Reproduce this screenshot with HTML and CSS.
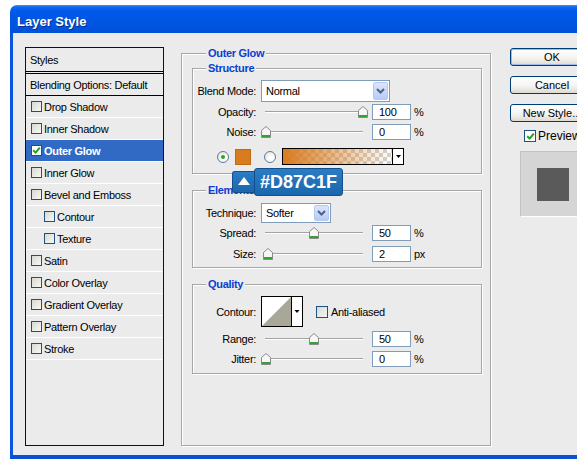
FILE: index.html
```html
<!DOCTYPE html>
<html>
<head>
<meta charset="utf-8">
<title>Layer Style</title>
<link rel="stylesheet" href="styles.css">
</head>
<body>
<div class="window">
  <div class="titlebar">Layer Style</div>
  <div class="body">
    <ul class="styles">
      <li class="hdr">Styles</li>
      <li class="blend">Blending Options: Default</li>
      <li><span class="cb"></span>Drop Shadow</li>
      <li><span class="cb"></span>Inner Shadow</li>
      <li class="sel"><span class="cb on"><svg width="9" height="9" viewBox="0 0 9 9"><path d="M1.2 4.2 L3.6 6.6 L7.8 1.6" fill="none" stroke="#21a121" stroke-width="2"/></svg></span>Outer Glow</li>
      <li><span class="cb"></span>Inner Glow</li>
      <li><span class="cb"></span>Bevel and Emboss</li>
      <li class="sub"><span class="cb"></span>Contour</li>
      <li class="sub"><span class="cb"></span>Texture</li>
      <li><span class="cb"></span>Satin</li>
      <li><span class="cb"></span>Color Overlay</li>
      <li><span class="cb"></span>Gradient Overlay</li>
      <li><span class="cb"></span>Pattern Overlay</li>
      <li><span class="cb"></span>Stroke</li>
    </ul>

    <fieldset class="group outer">
      <legend>Outer Glow</legend>

      <fieldset class="group inner structure">
        <legend>Structure</legend>
        <div class="row r-blend">
          <span class="lbl">Blend Mode:</span>
          <div class="select sel-blend"><span class="val">Normal</span><span class="drop"><svg width="9" height="6" viewBox="0 0 9 6"><path d="M1 1 L4.5 4.5 L8 1" fill="none" stroke="#4d6185" stroke-width="2"/></svg></span></div>
        </div>
        <div class="row r16 mb4">
          <span class="lbl">Opacity:</span>
          <div class="slider"><div class="track"><svg class="thumb" style="left:100%" width="10" height="12" viewBox="0 0 10 12"><path d="M0.5 4.5 L5 0.5 L9.5 4.5 V11.5 H0.5 Z" fill="#f6f6f6" stroke="#8a8a8a"/><rect x="1" y="9" width="8" height="2" fill="#2fa52f"/></svg></div></div>
          <div class="num">100</div><span class="unit">%</span>
        </div>
        <div class="row r16 mb8">
          <span class="lbl">Noise:</span>
          <div class="slider"><div class="track"><svg class="thumb" style="left:1%" width="10" height="12" viewBox="0 0 10 12"><path d="M0.5 4.5 L5 0.5 L9.5 4.5 V11.5 H0.5 Z" fill="#f6f6f6" stroke="#8a8a8a"/><rect x="1" y="9" width="8" height="2" fill="#2fa52f"/></svg></div></div>
          <div class="num">0</div><span class="unit">%</span>
        </div>
        <div class="row color-row">
          <span class="radio on"></span>
          <span class="swatch"></span>
          <span class="radio"></span>
          <div class="grad"><span class="grad-fill"></span><span class="mini-drop"><svg width="5" height="3" viewBox="0 0 5 3"><path d="M0 0 H5 L2.5 3 Z" fill="#000"/></svg></span></div>
          <div class="tip">
            <span class="tip-arrow"><svg width="12" height="8" viewBox="0 0 12 8"><path d="M0 8 L6 0 L12 8 Z" fill="#fff"/></svg></span>
            <span class="tip-hex">#D87C1F</span>
          </div>
        </div>
      </fieldset>

      <fieldset class="group inner elements">
        <legend>Elements</legend>
        <div class="row r-tech">
          <span class="lbl">Technique:</span>
          <div class="select sel-tech"><span class="val">Softer</span><span class="drop"><svg width="9" height="6" viewBox="0 0 9 6"><path d="M1 1 L4.5 4.5 L8 1" fill="none" stroke="#4d6185" stroke-width="2"/></svg></span></div>
        </div>
        <div class="row r16 mb5">
          <span class="lbl">Spread:</span>
          <div class="slider"><div class="track"><svg class="thumb" style="left:50%" width="10" height="12" viewBox="0 0 10 12"><path d="M0.5 4.5 L5 0.5 L9.5 4.5 V11.5 H0.5 Z" fill="#f6f6f6" stroke="#8a8a8a"/><rect x="1" y="9" width="8" height="2" fill="#2fa52f"/></svg></div></div>
          <div class="num">50</div><span class="unit">%</span>
        </div>
        <div class="row r16">
          <span class="lbl">Size:</span>
          <div class="slider"><div class="track"><svg class="thumb" style="left:3%" width="10" height="12" viewBox="0 0 10 12"><path d="M0.5 4.5 L5 0.5 L9.5 4.5 V11.5 H0.5 Z" fill="#f6f6f6" stroke="#8a8a8a"/><rect x="1" y="9" width="8" height="2" fill="#2fa52f"/></svg></div></div>
          <div class="num">2</div><span class="unit">px</span>
        </div>
      </fieldset>

      <fieldset class="group inner quality">
        <legend>Quality</legend>
        <div class="row r-contour">
          <span class="lbl">Contour:</span>
          <svg class="contour" width="42" height="31" viewBox="0 0 42 31"><rect x="0.5" y="0.5" width="41" height="30" fill="#fff" stroke="#000"/><path d="M1 30 L30 1 L30 30 Z" fill="#a9a798"/><line x1="30.5" y1="0" x2="30.5" y2="31" stroke="#000"/><path d="M33.5 14 H38.5 L36 17 Z" fill="#000"/></svg>
          <span class="cb aa"></span><span>Anti-aliased</span>
        </div>
        <div class="row r16 mb4">
          <span class="lbl">Range:</span>
          <div class="slider"><div class="track"><svg class="thumb" style="left:50%" width="10" height="12" viewBox="0 0 10 12"><path d="M0.5 4.5 L5 0.5 L9.5 4.5 V11.5 H0.5 Z" fill="#f6f6f6" stroke="#8a8a8a"/><rect x="1" y="9" width="8" height="2" fill="#2fa52f"/></svg></div></div>
          <div class="num">50</div><span class="unit">%</span>
        </div>
        <div class="row r16">
          <span class="lbl">Jitter:</span>
          <div class="slider"><div class="track"><svg class="thumb" style="left:1%" width="10" height="12" viewBox="0 0 10 12"><path d="M0.5 4.5 L5 0.5 L9.5 4.5 V11.5 H0.5 Z" fill="#f6f6f6" stroke="#8a8a8a"/><rect x="1" y="9" width="8" height="2" fill="#2fa52f"/></svg></div></div>
          <div class="num">0</div><span class="unit">%</span>
        </div>
      </fieldset>
    </fieldset>

    <div class="side">
      <div class="btn def">OK</div>
      <div class="btn">Cancel</div>
      <div class="btn last">New Style...</div>
      <div class="prev"><span class="cb on"><svg width="9" height="9" viewBox="0 0 9 9"><path d="M1.2 4.2 L3.6 6.6 L7.8 1.6" fill="none" stroke="#21a121" stroke-width="2"/></svg></span><span>Preview</span></div>
      <div class="preview-box"><span class="preview-sq"></span></div>
    </div>
  </div>
</div>
</body>
</html>
```

FILE: styles.css
```css
html, body {
  margin: 0;
  padding: 0;
  background: #fff;
  overflow: hidden;
}

body {
  font-family: "Liberation Sans", Arial, sans-serif;
  font-size: 11px;
  color: #000;
  letter-spacing: -0.3px;
}

.window {
  margin: 5px 0 0 10px;
  width: 640px;
}

.titlebar {
  height: 28px;
  box-sizing: border-box;
  padding: 6px 0 0 7px;
  line-height: 22px;
  font-size: 13px;
  font-weight: bold;
  letter-spacing: 0;
  color: #fff;
  text-shadow: 1px 1px 0 #0b2d8a;
  border-radius: 7px 7px 0 0;
  background: linear-gradient(#3f91f8 0, #1168f2 2px, #0059e9 6px, #0055e3 60%, #0051d8 100%);
}

.body {
  display: flex;
  align-items: flex-start;
  height: 426px;
  box-sizing: border-box;
  padding: 14px 0 0 12px;
  background: #ebebeb;
  border-left: 3px solid #0a55e0;
  border-bottom: 4px solid #0a4fd6;
}

/* ---- styles list ---- */
.styles {
  list-style: none;
  margin: 0;
  padding: 0;
  width: 139px;
  height: 399px;
  box-sizing: border-box;
  border: 1px solid #111;
  flex: none;
}

.styles li {
  height: 22px;
  box-sizing: border-box;
  border-bottom: 1px solid #fff;
  display: flex;
  align-items: center;
  padding-left: 5px;
  white-space: nowrap;
}

.styles li.hdr {
  height: 26px;
  border-bottom: 3px double #000;
  padding-left: 4px;
}

.styles li.blend {
  border-bottom: 1px solid #000;
  padding-left: 4px;
}

.styles li.sub {
  padding-left: 18px;
}

.styles li.sel {
  background: #316ac5;
  color: #fff;
  font-weight: bold;
}

.cb {
  display: inline-flex;
  align-items: center;
  justify-content: center;
  width: 11px;
  height: 11px;
  box-sizing: border-box;
  border: 1px solid #1c5180;
  background: linear-gradient(135deg, #d9d9d3, #f7f7f5);
  margin-right: 2px;
  flex: none;
}

.cb.on {
  background: #fff;
}

.cb svg {
  display: block;
}

/* ---- group boxes ---- */
.group {
  margin: 0;
  padding: 0;
  min-width: 0;
  box-sizing: border-box;
  border: 1px solid #a7a7a7;
  box-shadow: inset 1px 1px 0 #fff, 1px 1px 0 #fff;
}

.group > legend {
  padding: 0 2px;
  margin-left: 13px;
  font-weight: bold;
  color: #0a3ed0;
  line-height: 13px;
  background: #ebebeb;
}

.outer {
  width: 310px;
  height: 399px;
  margin-left: 17px;
  padding: 2px 8px 0 10px;
  flex: none;
}

.outer > legend {
  margin-left: 14px;
}

.inner {
  width: 290px;
}

.structure {
  padding: 5px 0 8px;
}

.elements {
  margin-top: 10px;
  padding: 6px 0 5px;
}

.quality {
  margin-top: 10px;
  padding: 5px 0 6px;
}

/* ---- rows ---- */
.row {
  display: flex;
  align-items: center;
}

.lbl {
  width: 63px;
  margin-right: 5px;
  text-align: right;
  flex: none;
}

.r-blend {
  height: 22px;
  margin-bottom: 2px;
}

.r-tech {
  height: 20px;
  margin-bottom: 2px;
}

.r-contour {
  height: 31px;
  margin-bottom: 4px;
}

.r16 {
  height: 16px;
}

.mb4 { margin-bottom: 4px; }
.mb5 { margin-bottom: 5px; }
.mb8 { margin-bottom: 8px; }

.select {
  display: flex;
  align-items: center;
  box-sizing: border-box;
  border: 1px solid #7f9db9;
  background: #fff;
  padding: 0 1px 0 4px;
  flex: none;
}

.sel-blend {
  width: 129px;
  height: 22px;
}

.sel-tech {
  width: 70px;
  height: 20px;
}

.select .val {
  flex: 1;
}

.drop {
  width: 15px;
  height: calc(100% - 2px);
  box-sizing: border-box;
  border: 1px solid #b7c8f0;
  border-radius: 2px;
  background: linear-gradient(#dbe5fd, #b8cbf6);
  display: flex;
  align-items: center;
  justify-content: center;
}

.slider {
  width: 107px;
  height: 16px;
  display: flex;
  align-items: center;
  flex: none;
}

.track {
  position: relative;
  margin-left: 4px;
  width: 98px;
  height: 2px;
  box-sizing: border-box;
  border-top: 1px solid #a3a3a3;
  border-bottom: 1px solid #fff;
}

.thumb {
  position: absolute;
  top: -6px;
  margin-left: -5px;
  display: block;
}

.num {
  width: 39px;
  height: 16px;
  box-sizing: border-box;
  border: 1px solid #7f9db9;
  background: #fff;
  padding-left: 6px;
  line-height: 14px;
  margin-left: 4px;
  flex: none;
}

.unit {
  margin-left: 3px;
}

/* ---- colour row ---- */
.color-row {
  position: relative;
  height: 17px;
  padding-left: 24px;
}

.radio {
  width: 12px;
  height: 12px;
  box-sizing: border-box;
  border: 1px solid #5d7a9c;
  border-radius: 50%;
  background: radial-gradient(circle at 65% 65%, #fff 20%, #dcdcd6 100%);
  margin-right: 6px;
  flex: none;
  display: flex;
  align-items: center;
  justify-content: center;
}

.radio.on::after {
  content: "";
  width: 4px;
  height: 4px;
  border-radius: 50%;
  background: #2aa52a;
}

.swatch {
  width: 16px;
  height: 16px;
  box-sizing: border-box;
  background: #d87c1f;
  border: 1px solid #c06a15;
  margin-right: 13px;
  flex: none;
}

.grad {
  width: 122px;
  height: 17px;
  box-sizing: border-box;
  border: 1px solid #000;
  display: flex;
  flex: none;
}

.grad-fill {
  flex: 1;
  background:
    linear-gradient(to right, #d87c1f, rgba(216, 124, 31, 0)),
    repeating-conic-gradient(#d2d2d2 0 25%, #fff 0 50%) 0 0 / 8px 8px;
}

.mini-drop {
  width: 10px;
  border-left: 1px solid #000;
  background: #fff;
  display: flex;
  align-items: center;
  justify-content: center;
}

.mini-drop svg {
  display: block;
}

/* tooltip over the colour row */
.tip {
  position: absolute;
  left: 39px;
  top: 20px;
  display: flex;
  align-items: center;
  z-index: 5;
  letter-spacing: 0;
}

.tip-arrow {
  width: 22px;
  height: 22px;
  box-sizing: border-box;
  border: 1px solid #134f8c;
  border-right: none;
  border-radius: 3px 0 0 3px;
  background: linear-gradient(#2a7cc4, #1b67ad);
  display: flex;
  align-items: center;
  justify-content: center;
}

.tip-arrow svg {
  display: block;
  margin-top: -2px;
}

.tip-hex {
  width: 89px;
  height: 28px;
  box-sizing: border-box;
  border: 1px solid #134f8c;
  border-radius: 3px;
  background: linear-gradient(#2a7cc4, #1b67ad);
  color: #fff;
  font-weight: bold;
  font-size: 18px;
  line-height: 26px;
  text-align: center;
}

/* ---- quality ---- */
.contour {
  display: block;
  flex: none;
}

.cb.aa {
  width: 12px;
  height: 12px;
  margin-left: 13px;
  margin-right: 3px;
}

/* ---- right column ---- */
.side {
  margin-left: 19px;
  padding-top: 1px;
  width: 100px;
  flex: none;
}

.btn {
  width: 84px;
  height: 18px;
  box-sizing: border-box;
  border: 1px solid #003c74;
  border-radius: 3px;
  background: linear-gradient(#ffffff, #f4f4f2 55%, #dedad0);
  text-align: center;
  line-height: 16px;
  margin-bottom: 10px;
  letter-spacing: 0;
}

.btn.def {
  box-shadow: inset 0 0 0 1px #9dbbee;
}

.btn.last {
  margin-bottom: 8px;
}

.prev {
  display: flex;
  align-items: center;
  height: 12px;
  margin-left: 14px;
  margin-bottom: 9px;
  letter-spacing: 0;
  font-size: 12px;
}

.prev .cb {
  width: 12px;
  height: 12px;
}

.preview-box {
  width: 66px;
  height: 66px;
  box-sizing: border-box;
  margin-left: 10px;
  background: #d5d5d5;
  border: 1px solid #c2c2c2;
  border-bottom-color: #fff;
  display: flex;
  align-items: center;
  justify-content: center;
}

.preview-sq {
  width: 32px;
  height: 33px;
  background: #5a5a5a;
}
```
